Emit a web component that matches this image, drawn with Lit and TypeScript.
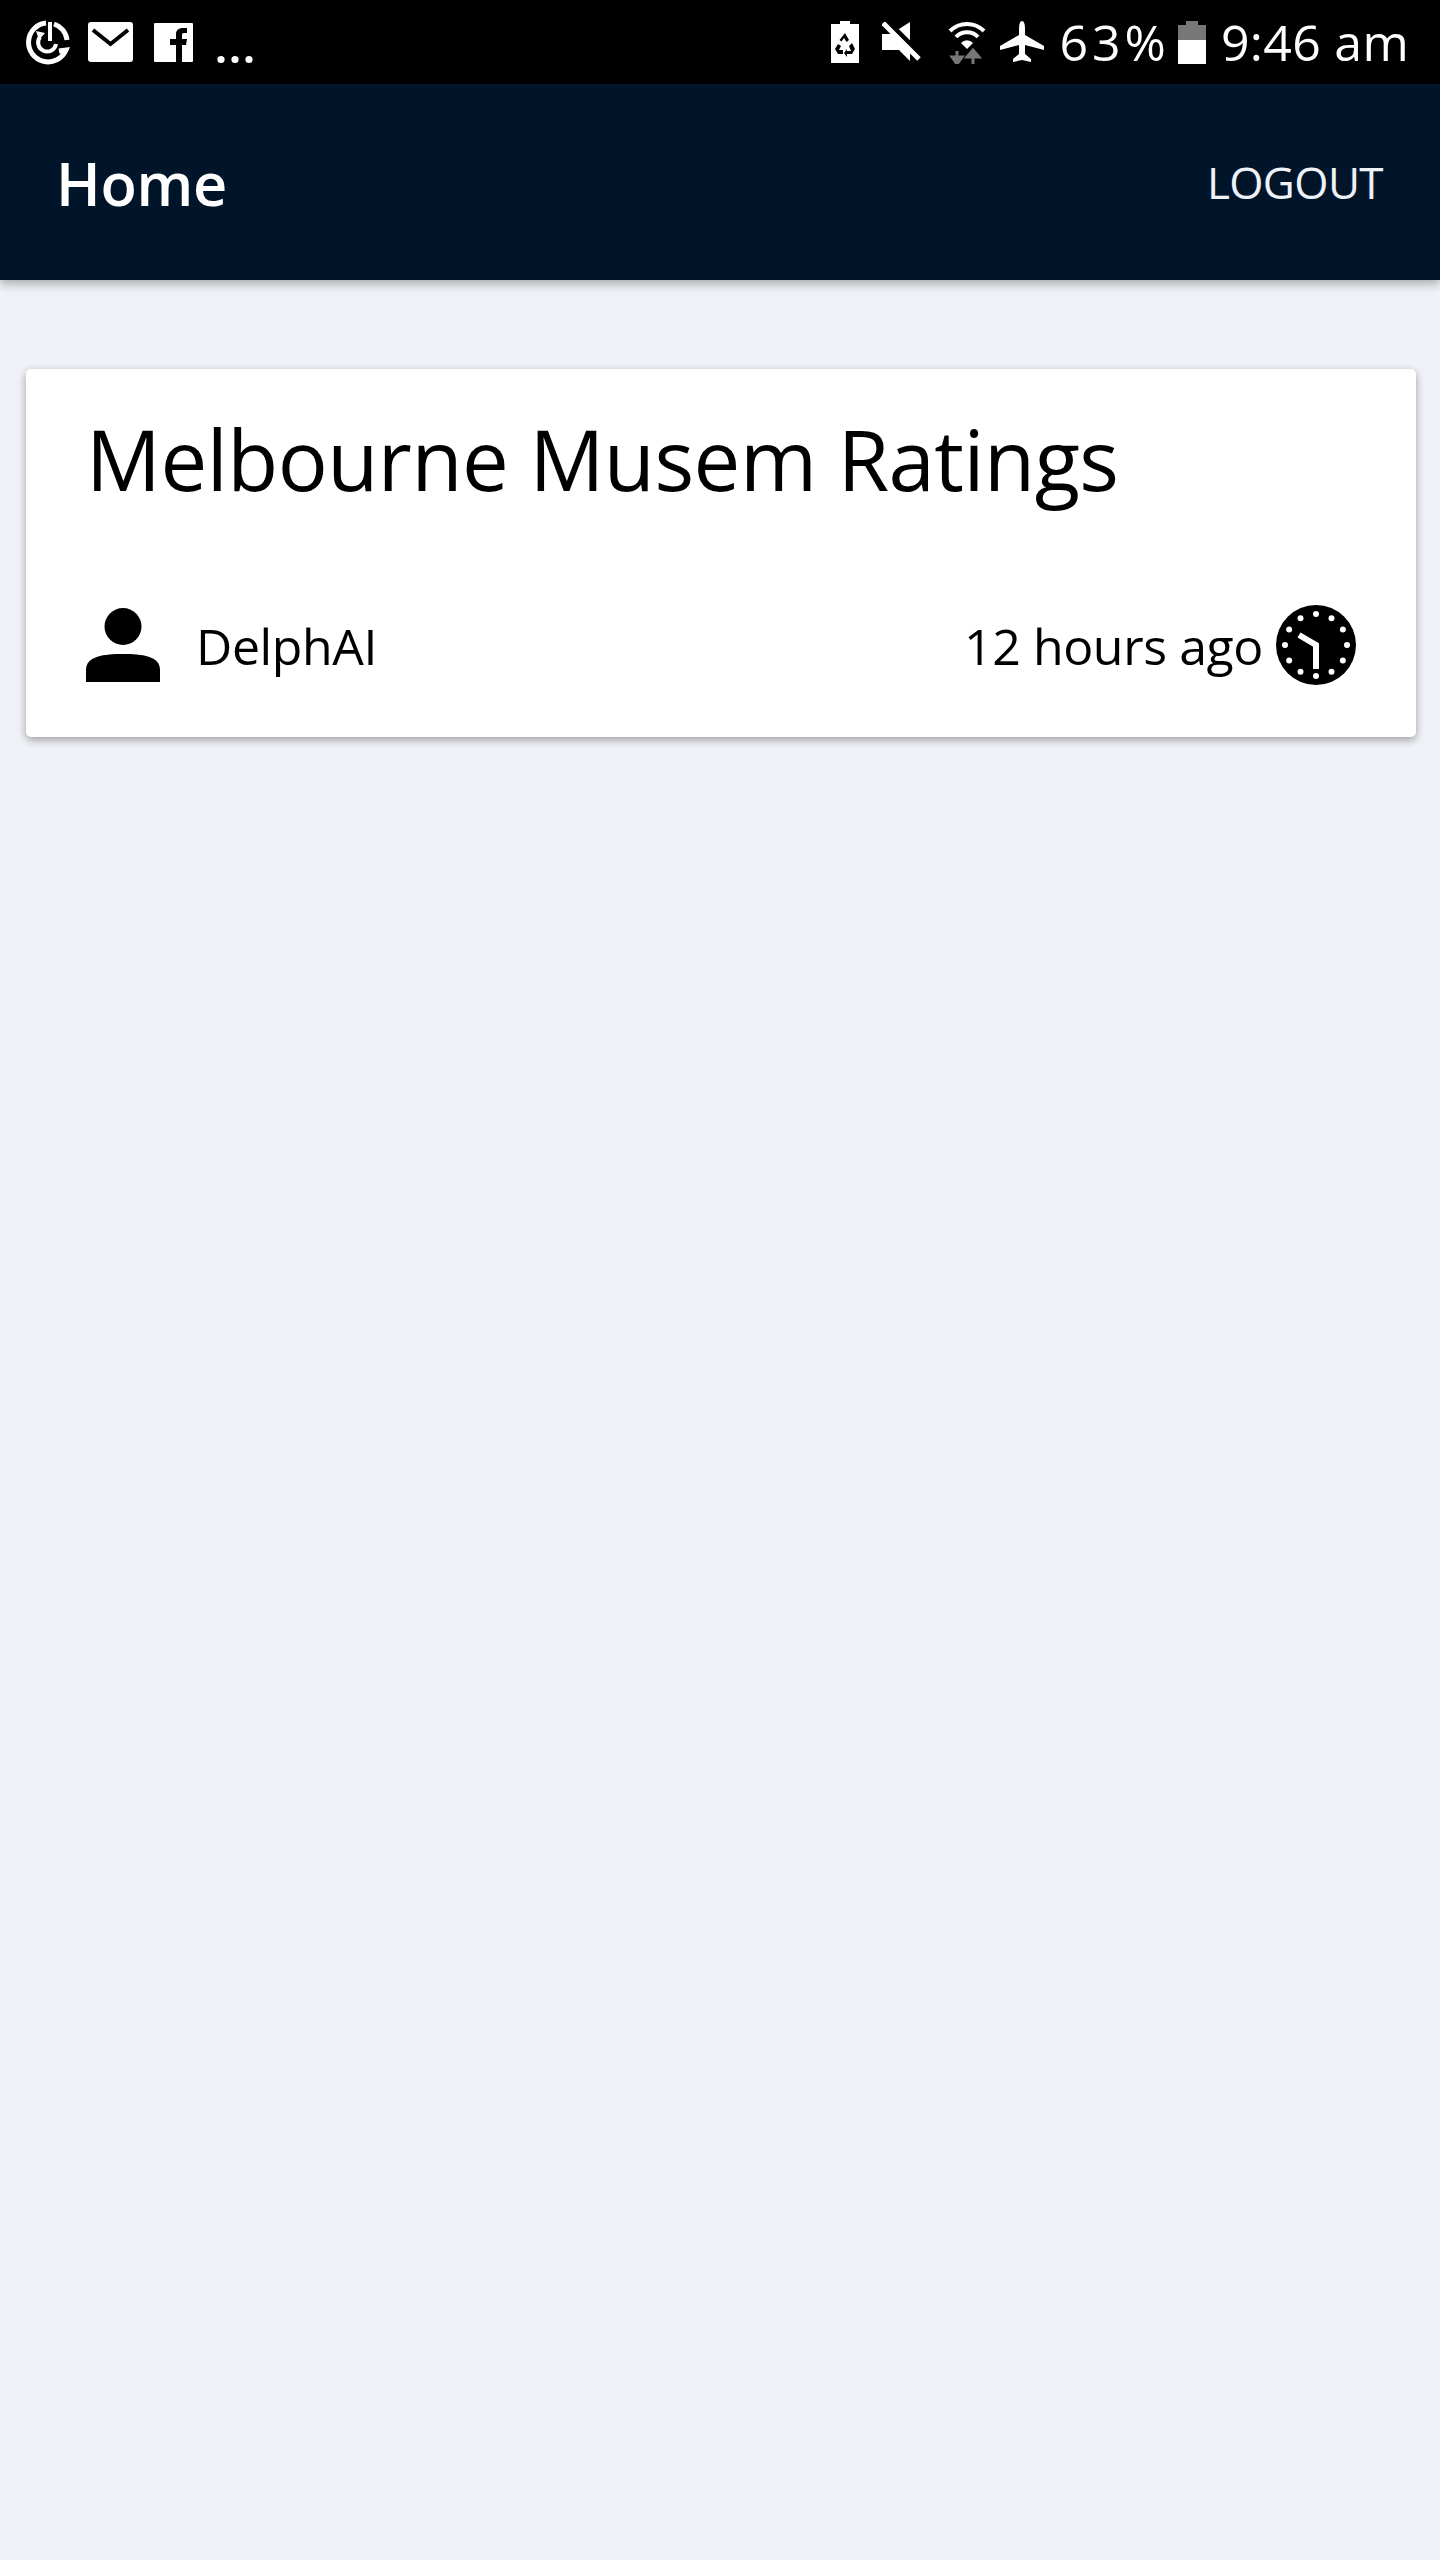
import { LitElement, html, css, svg } from "lit";
import { customElement } from "lit/decorators.js";

const clockDots = Array.from({ length: 12 }, (_, i) => {
  const a = (i * Math.PI) / 6;
  return svg`<circle cx=${40 + 31 * Math.sin(a)} cy=${40 - 31 * Math.cos(a)} r="3" fill="#fff"/>`;
});

@customElement("app-root")
export class AppRoot extends LitElement {
  static styles = css`
    :host { display: block; width: 1440px; height: 2560px; background: #f0f2f7; font-family: "Open Sans", "Noto Sans", sans-serif; color: #000; overflow: hidden; }
    svg { display: block; flex: none; }
    .status { height: 84px; background: #000; color: #fff; display: flex; align-items: center; padding: 0 31px 0 25px; box-sizing: border-box; }
    .left { display: flex; align-items: center; gap: 18px; }
    .spacer { flex: 1; }
    .right { display: flex; align-items: center; }
    .st { font-size: 50px; line-height: 84px; white-space: nowrap; }
    .pct { letter-spacing: 4px; margin-left: 15px; }
    .time { letter-spacing: 0.3px; margin-left: 15px; }
    .ic-mute { margin-left: 23px; }
    .ic-wifi { margin-left: 26px; }
    .ic-plane { margin-left: 14px; }
    .ic-batt { margin-left: 8px; }
    .ic-fb { margin-left: 3px; }
    .ic-dots { margin: 34px 0 0 5px; }
    .bar { height: 196px; background: #00152a; color: #fff; display: flex; align-items: center; justify-content: space-between; padding: 0 57px 0 56px; box-shadow: 0 4px 10px rgba(0,0,0,.3); position: relative; }
    .home { font-size: 59.5px; font-weight: 600; letter-spacing: -0.3px; }
    .logout { font-size: 44px; color: #eef2f8; letter-spacing: -0.6px; }
    .main { padding: 89px 24px 0 26px; }
    .card { height: 368px; box-sizing: border-box; background: #fff; border-radius: 5px; box-shadow: 0 3px 8px rgba(0,0,0,.35); padding: 0 60px; display: flex; flex-direction: column; }
    .title { font-size: 83.3px; line-height: 110px; margin-top: 35px; letter-spacing: -0.5px; white-space: nowrap; }
    .meta { display: flex; align-items: center; justify-content: space-between; margin-top: 91px; font-size: 50px; letter-spacing: -0.4px; }
    .who, .when { display: flex; align-items: center; }
    .who span { margin: 2px 0 0 36px; }
    .when span { margin: 2px 13px 0 0; }
  `;

  render() {
    return html`
      <div class="status">
        <div class="left">
          <svg width="45" height="45" viewBox="0 0 45 45" fill="none" stroke="#fff" stroke-width="5">
            <path d="M21 3 A19.5 19.5 0 1 0 41 30 L34 31"/>
            <path d="M29 4 A19.5 19.5 0 0 1 42 20"/>
            <path d="M25 2 V21" stroke-width="4"/>
            <path d="M15 17 A9 9 0 1 0 31 24" stroke-width="4"/>
            <path d="M11 11 L20 13 L14 20 Z" fill="#fff" stroke="none"/>
          </svg>
          <svg width="45" height="40" viewBox="0 0 45 40"><rect width="45" height="40" rx="3" fill="#fff"/><path d="M5 8 L22.5 22 L40 8" fill="none" stroke="#000" stroke-width="4"/></svg>
          <svg class="ic-fb" width="39" height="39" viewBox="0 0 39 39"><rect width="39" height="39" rx="1" fill="#fff"/><path d="M22 39 V22 H16 V16 H22 V11 C22 7 25 5 29 5 H33 V10 H30 C28 10 28 11 28 13 V16 H33 L32 22 H28 V39 Z" fill="#000"/></svg>
          <svg class="ic-dots" width="38" height="9" viewBox="0 0 38 9" fill="#fff"><circle cx="5" cy="4.5" r="3.6"/><circle cx="19" cy="4.5" r="3.6"/><circle cx="33" cy="4.5" r="3.6"/></svg>
        </div>
        <div class="spacer"></div>
        <div class="right">
          <svg width="28" height="42" viewBox="0 0 28 42"><path d="M9 0 H19 V3 H28 V42 H0 V3 H9 Z" fill="#fff"/><path d="M14 12 L18 19 L15.5 21 L13 17 L10.5 20.5 L8.5 19 Z M7 23 L4 28 L7 33 H12 V29 H8 L10 25 Z M21 22 L24 28 L21 33 H16 V36 L13 32 L16 28 V30 H20 L18 25 Z" fill="#000"/></svg>
          <svg class="ic-mute" width="40" height="40" viewBox="0 0 40 40"><path d="M0 12 H9 L28 0 V39 L17 28 H0 Z" fill="#fff"/><path d="M4 0 L40 36" stroke="#000" stroke-width="8"/><path d="M1 1 L37 37" stroke="#fff" stroke-width="5"/></svg>
          <svg class="ic-wifi" width="38" height="44" viewBox="0 0 38 44" fill="none">
            <path d="M2 11 A24 24 0 0 1 36 11 M8 17 A15 15 0 0 1 30 17" stroke="#fff" stroke-width="4"/>
            <path d="M13 23 A8 8 0 0 1 25 23 L19 29 Z" fill="#fff"/>
            <path d="M9 31 V43 M4 37 L9 44 L14 37 H4 Z M25 44 V32 M19 37 L25 30 L31 37 Z" fill="#777" stroke="#777" stroke-width="3"/>
          </svg>
          <svg class="ic-plane" width="44" height="42" viewBox="0 0 44 42"><path d="M22 0 C24 0 25 3 25 8 V14 L44 25 V29 L25 24 V33 L31 38 V41 L22 39 L13 41 V38 L19 33 V24 L0 29 V25 L19 14 V8 C19 3 20 0 22 0 Z" fill="#fff"/></svg>
          <span class="st pct">63%</span>
          <svg class="ic-batt" width="28" height="43" viewBox="0 0 28 43"><path d="M8 0 H20 V4 H28 V19 H0 V4 H8 Z" fill="#777"/><rect y="19" width="28" height="24" fill="#fff"/></svg>
          <span class="st time">9:46 am</span>
        </div>
      </div>
      <div class="bar">
        <div class="home">Home</div>
        <div class="logout">LOGOUT</div>
      </div>
      <div class="main">
        <div class="card">
          <div class="title">Melbourne Musem Ratings</div>
          <div class="meta">
            <div class="who">
              <svg width="74" height="74" viewBox="0 0 74 74"><circle cx="37" cy="18.5" r="18.5"/><path d="M0 74 V62 C0 48 18 46 37 46 C56 46 74 48 74 62 V74 Z"/></svg>
              <span>DelphAI</span>
            </div>
            <div class="when">
              <span>12 hours ago</span>
              <svg width="80" height="80" viewBox="0 0 80 80"><circle cx="40" cy="40" r="40"/>${clockDots}<path d="M40 64 V40 L23 30" fill="none" stroke="#fff" stroke-width="6"/></svg>
            </div>
          </div>
        </div>
      </div>
    `;
  }
}
